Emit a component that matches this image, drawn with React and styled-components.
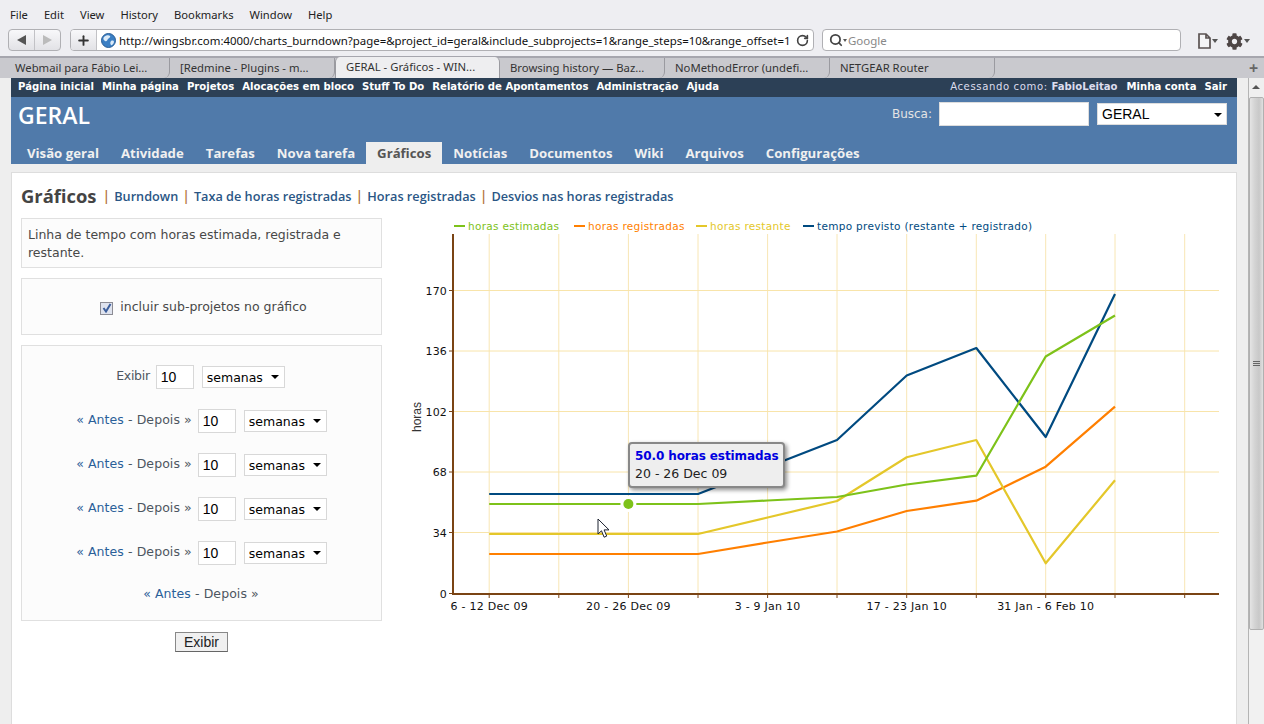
import React from 'react'
import styled, { createGlobalStyle } from 'styled-components'
import { Search, RotateCw, Plus } from 'lucide-react'
import { FaCog } from 'react-icons/fa'

const VERDANA = '"DejaVu Sans", Verdana, sans-serif'
const TREBUCHET = '"Open Sans", "Noto Sans", sans-serif'
const SEGOE = '"Noto Sans", "Open Sans", sans-serif'
const ARIAL = '"Liberation Sans", Arial, sans-serif'

const GlobalStyle = createGlobalStyle`
    html, body {
        margin: 0;
        padding: 0;
        height: 724px;
        overflow: hidden;
        background: #eee;
    }
    * { box-sizing: border-box; }
`

const chromeMenu = ['File', 'Edit', 'View', 'History', 'Bookmarks', 'Window', 'Help']
const browserTabs = ['Webmail para Fábio Lei...', '[Redmine - Plugins - m...', 'GERAL - Gráficos - WIN...', 'Browsing history — Baz...', 'NoMethodError (undefi...', 'NETGEAR Router']
const topLinks = ['Página inicial', 'Minha página', 'Projetos', 'Alocações em bloco', 'Stuff To Do', 'Relatório de Apontamentos', 'Administração', 'Ajuda']
const mainTabs = ['Visão geral', 'Atividade', 'Tarefas', 'Nova tarefa', 'Gráficos', 'Notícias', 'Documentos', 'Wiki', 'Arquivos', 'Configurações']
const chartLinks = ['Burndown', 'Taxa de horas registradas', 'Horas registradas', 'Desvios nas horas registradas']

const gridX = [489.2, 558.8, 628.4, 698, 767.6, 837, 906.7, 976.3, 1045.7, 1115, 1184.7]
const gridY = [[170, 290.5], [136, 351], [102, 411.5], [68, 472], [34, 532.5]]
const xLabels = [[0, '6 - 12 Dec 09'], [2, '20 - 26 Dec 09'], [4, '3 - 9 Jan 10'], [6, '17 - 23 Jan 10'], [8, '31 Jan - 6 Feb 10']]

const series = [
    { color: '#FF7F00', w: 2.2, ys: [554, 554, 554, 554, 542.5, 531.5, 511, 500.7, 466.7, 406.7] },
    { color: '#E4C72A', w: 2.2, ys: [534, 534, 534, 534, 517.5, 501, 457.3, 440, 563.3, 480.3] },
    { color: '#004A80', w: 2.2, ys: [494, 494, 494, 494, 467, 440, 375.5, 348, 437, 294] },
    { color: '#7DC21A', w: 2.2, ys: [504, 504, 504, 504, 500.5, 497, 484.5, 475.7, 356.5, 315.5] },
]

const legend = [
    { color: '#7DC21A', text: 'horas estimadas', x: 454 },
    { color: '#FF7F00', text: 'horas registradas', x: 574 },
    { color: '#E4C72A', text: 'horas restante', x: 696 },
    { color: '#004A80', text: 'tempo previsto (restante + registrado)', x: 803 },
]

function Chart() {
    return (
        <svg width="830" height="410" viewBox="400 218 830 410">
            {gridX.map(x => <line key={x} x1={x} x2={x} y1="234" y2="593" stroke="#F8E6B4" />)}
            {gridY.map(([, y]) => <line key={y} x1="453" x2="1219" y1={y} y2={y} stroke="#F8E4AA" />)}

            <line x1="453" x2="453" y1="234" y2="595" stroke="#7A4414" strokeWidth="2" />
            <line x1="453" x2="1219" y1="594" y2="594" stroke="#7A4414" strokeWidth="2" />
            {gridX.map(x => <line key={x} x1={x} x2={x} y1="594" y2="598" stroke="#7A4414" />)}
            {[...gridY, [0, 593.5]].map(([v, y]) => (
                <g key={v}>
                    <line x1="449" x2="453" y1={y} y2={y} stroke="#7A4414" />
                    <text x="447" y={y + 4} textAnchor="end" fontFamily={VERDANA} fontSize="11" letterSpacing="0.15" fill="#111">{v}</text>
                </g>
            ))}
            {xLabels.map(([i, label]) => (
                <text key={label} x={gridX[i]} y="610" textAnchor="middle" fontFamily={VERDANA} fontSize="11" letterSpacing="0.25" fill="#111">{label}</text>
            ))}
            <text transform="translate(421 417) rotate(-90)" textAnchor="middle" fontFamily={ARIAL} fontSize="12" fill="#333">horas</text>

            {series.map(s => (
                <polyline key={s.color} fill="none" stroke={s.color} strokeWidth={s.w} strokeLinejoin="round"
                    points={s.ys.map((y, i) => `${gridX[i]},${y}`).join(' ')} />
            ))}
            <circle cx="628.4" cy="504" r="8" fill="#fff" />
            <circle cx="628.4" cy="504" r="5" fill="#7DC21A" />

            {legend.map(l => (
                <g key={l.text}>
                    <line x1={l.x} x2={l.x + 11} y1="226" y2="226" stroke={l.color} strokeWidth="2" />
                    <text x={l.x + 14} y="230" fontFamily={VERDANA} fontSize="10.5" letterSpacing="0.3" fill={l.color}>{l.text}</text>
                </g>
            ))}
        </svg>
    )
}

function Globe() {
    return (
        <svg width="15" height="15" viewBox="0 0 15 15">
            <circle cx="7.5" cy="7.5" r="7" fill="#3B7FC4" stroke="#2A5E96" />
            <path d="M3 4c2-2 5-2 6-1s-1 2-2 3-1 3-3 2-2-3-1-4zM10 8c2-1 3 0 3 1s-2 4-3 3-1-3 0-4z" fill="#DCEBF8" />
        </svg>
    )
}

function PageIcon() {
    return (
        <svg width="13" height="16" viewBox="0 0 13 16">
            <path d="M1 1h7l4 4v10H1zM8 1v4h4" fill="#f4f4f6" stroke="#5a5252" strokeWidth="1.7" />
        </svg>
    )
}

function MouseCursor() {
    return (
        <svg width="14" height="21" viewBox="0 0 14 21">
            <path d="M1 1v15l3.5-3.2 2.6 6.4 2.6-1.1-2.6-6.2H12z" fill="#fff" stroke="#1c2230" strokeWidth="1" />
        </svg>
    )
}

function UnitSelect() {
    return (
        <SelectBox>
            <NativeSelect defaultValue="semanas">
                <option>semanas</option>
                <option>meses</option>
            </NativeSelect>
        </SelectBox>
    )
}

function RangeLinks() {
    return <RangeText><RangeLink>« Antes</RangeLink> - Depois »</RangeText>
}

function App() {
    return (
        <Screen>
            <GlobalStyle />
            <BrowserChrome>
                <MenuBar>
                    {chromeMenu.map(m => <MenuItem key={m}>{m}</MenuItem>)}
                </MenuBar>
                <Toolbar>
                    <NavGroup>
                        <NavButton><Arrow $dir="left" /></NavButton>
                        <NavButton $disabled><Arrow $dir="right" $disabled /></NavButton>
                    </NavGroup>
                    <AddressBar>
                        <PlusBox><Plus size={15} strokeWidth={3} color="#333" /></PlusBox>
                        <UrlField>
                            <Globe />
                            <UrlText>http://wingsbr.com:4000/charts_burndown?page=&amp;project_id=geral&amp;include_subprojects=1&amp;range_steps=10&amp;range_offset=1</UrlText>
                            <RotateCw size={13} strokeWidth={3} color="#444" />
                        </UrlField>
                    </AddressBar>
                    <SearchBar>
                        <Search size={14} strokeWidth={3} color="#444" />
                        <SearchCaret />
                        <SearchHint>Google</SearchHint>
                    </SearchBar>
                    <ToolIcons>
                        <ToolIcon><PageIcon /><SmallCaret /></ToolIcon>
                        <ToolIcon><FaCog size={17} color="#4d4545" /><SmallCaret /></ToolIcon>
                    </ToolIcons>
                </Toolbar>
                <TabStrip>
                    {browserTabs.map(t => <BrowserTab key={t} $active={t.startsWith('GERAL')}>{t}</BrowserTab>)}
                    <NewTab>+</NewTab>
                </TabStrip>
            </BrowserChrome>

            <Viewport>
                <Page>
                    <TopMenu>
                        <TopLinks>
                            {topLinks.map(l => <TopLink key={l}>{l}</TopLink>)}
                        </TopLinks>
                        <TopLinks>
                            <LoggedAs>Acessando como: <TopLink>FabioLeitao</TopLink></LoggedAs>
                            <TopLink>Minha conta</TopLink>
                            <TopLink>Sair</TopLink>
                        </TopLinks>
                    </TopMenu>
                    <Header>
                        <HeaderRow>
                            <ProjectName>GERAL</ProjectName>
                            <QuickSearch>
                                <SearchLabel>Busca:</SearchLabel>
                                <SearchInput />
                                <ProjectJump>
                                    <ProjectSelect defaultValue="GERAL"><option>GERAL</option></ProjectSelect>
                                </ProjectJump>
                            </QuickSearch>
                        </HeaderRow>
                        <MainTabs>
                            {mainTabs.map(t => <MainTab key={t} $active={t === 'Gráficos'}>{t}</MainTab>)}
                        </MainTabs>
                    </Header>
                    <Content>
                        <TitleRow>
                            <Title>Gráficos</Title>
                            {chartLinks.map(l => (
                                <React.Fragment key={l}>
                                    <Pipe>|</Pipe>
                                    <ChartLink>{l}</ChartLink>
                                </React.Fragment>
                            ))}
                        </TitleRow>
                        <Columns>
                            <Sidebar>
                                <Panel>
                                    <Intro>Linha de tempo com horas estimada, registrada e restante.</Intro>
                                </Panel>
                                <CheckPanel>
                                    <CheckMark>
                                        <svg width="10" height="10" viewBox="0 0 10 10">
                                            <path d="M1.5 5l2.5 3.5L8.5 1" fill="none" stroke="#3d5f9c" strokeWidth="2" />
                                        </svg>
                                    </CheckMark>
                                    <span>incluir sub-projetos no gráfico</span>
                                </CheckPanel>
                                <RangePanel>
                                    <RangeRow>
                                        <ShowText>Exibir</ShowText>
                                        <NumberInput defaultValue="10" />
                                        <UnitSelect />
                                    </RangeRow>
                                    {[0, 1, 2, 3].map(i => (
                                        <RangeRow key={i}>
                                            <RangeLinks />
                                            <NumberInput defaultValue="10" />
                                            <UnitSelect />
                                        </RangeRow>
                                    ))}
                                    <LastRange><RangeLinks /></LastRange>
                                </RangePanel>
                                <SubmitRow><SubmitButton>Exibir</SubmitButton></SubmitRow>
                            </Sidebar>
                            <ChartArea>
                                <Chart />
                                <Tooltip>
                                    <TooltipTitle>50.0 horas estimadas</TooltipTitle>
                                    <TooltipDate>20 - 26 Dec 09</TooltipDate>
                                </Tooltip>
                                <CursorSpot><MouseCursor /></CursorSpot>
                            </ChartArea>
                        </Columns>
                    </Content>
                </Page>
                <Scrollbar>
                    <ScrollUp />
                    <ScrollThumb><Grip /><Grip /><Grip /></ScrollThumb>
                </Scrollbar>
            </Viewport>
        </Screen>
    )
}

export default App

const Screen = styled.div`
    width: 1264px;
    height: 724px;
    display: flex;
    flex-direction: column;
    overflow: hidden;
`

const BrowserChrome = styled.div`
    height: 78px;
    flex: none;
    background: #eeeef2;
    font-family: ${SEGOE};
    color: #222;
`

const MenuBar = styled.div`
    height: 26px;
    display: flex;
    align-items: center;
    gap: 16px;
    padding: 2px 0 0 10px;
    font-size: 11.2px;
`

const MenuItem = styled.span``

const Toolbar = styled.div`
    height: 30px;
    display: flex;
    align-items: flex-start;
    padding: 3px 0 0 8px;
`

const NavGroup = styled.div`
    width: 53px;
    height: 22px;
    display: flex;
    border: 1px solid #b0b0b4;
    border-radius: 4px;
    background: linear-gradient(#f8f8fa, #e2e2e6);
`

const NavButton = styled.div`
    flex: 1;
    display: flex;
    align-items: center;
    justify-content: center;
    & + & { border-left: 1px solid #c2c2c6; }
`

const Arrow = styled.span`
    width: 0;
    height: 0;
    border-top: 5px solid transparent;
    border-bottom: 5px solid transparent;
    ${p => p.$dir === 'left'
        ? `border-right: 9px solid ${p.$disabled ? '#bbb' : '#555'};`
        : `border-left: 9px solid ${p.$disabled ? '#bbb' : '#555'};`}
`

const AddressBar = styled.div`
    width: 744px;
    height: 22px;
    margin-left: 9px;
    display: flex;
    border: 1px solid #b0b0b4;
    border-radius: 4px;
    overflow: hidden;
    background: #fff;
`

const PlusBox = styled.div`
    width: 26px;
    flex: none;
    display: flex;
    align-items: center;
    justify-content: center;
    background: linear-gradient(#f8f8fa, #e2e2e6);
    border-right: 1px solid #c2c2c6;
`

const UrlField = styled.div`
    flex: 1;
    min-width: 0;
    display: flex;
    align-items: center;
    padding: 0 4px;
    & > svg { flex: none; }
`

const UrlText = styled.span`
    flex: 1;
    margin-left: 3px;
    font-size: 11.43px;
    color: #111;
    white-space: nowrap;
`

const SearchBar = styled.div`
    width: 359px;
    height: 22px;
    margin-left: 8px;
    display: flex;
    align-items: center;
    padding-left: 6px;
    border: 1px solid #b0b0b4;
    border-radius: 4px;
    background: #fff;
`

const SearchHint = styled.span`
    margin-left: 1px;
    font-size: 11.5px;
    color: #888;
`

const SmallCaret = styled.span`
    width: 0;
    height: 0;
    border-left: 3.5px solid transparent;
    border-right: 3.5px solid transparent;
    border-top: 4px solid #555;
`

const SearchCaret = styled(SmallCaret)`
    border-left-width: 2.5px;
    border-right-width: 2.5px;
    border-top-width: 3px;
`

const ToolIcons = styled.div`
    display: flex;
    align-items: center;
    gap: 8px;
    height: 24px;
    margin-left: 17px;
`

const ToolIcon = styled.div`
    display: flex;
    align-items: center;
    gap: 1px;
`

const TabStrip = styled.div`
    height: 22px;
    display: flex;
    padding-left: 5px;
    background: #c9c9ce;
    border-top: 2px solid #a6a6ae;
    font-size: 11.3px;
    color: #333;
`

const BrowserTab = styled.div`
    width: 165px;
    padding: 0 0 2px 10px;
    display: flex;
    align-items: center;
    white-space: nowrap;
    border-right: 1px solid #9a9aa0;
    border-bottom-right-radius: 6px;
    ${p => p.$active && `
        background: #eeeef0;
        margin-top: -1px;
        border-left: 1px solid #9a9aa0;
        border-radius: 5px 5px 0 0;
    `}
`

const NewTab = styled.div`
    margin-left: auto;
    width: 20px;
    padding-left: 5px;
    font-size: 16px;
    font-weight: 700;
    line-height: 20px;
    color: #666;
`

const Viewport = styled.div`
    flex: 1;
    min-height: 0;
    display: flex;
`

const Page = styled.div`
    width: 1248px;
    padding: 0 11px;
    background: #eee;
    display: flex;
    flex-direction: column;
`

const TopMenu = styled.div`
    height: 19px;
    flex: none;
    display: flex;
    align-items: center;
    justify-content: space-between;
    padding: 0 10px 2px 7px;
    background: #2c4056;
    color: #fff;
    font-family: ${VERDANA};
    font-size: 10.1px;
`

const TopLinks = styled.div`
    display: flex;
    gap: 8px;
`

const TopLink = styled.span`
    font-weight: 700;
    letter-spacing: 0;
`

const LoggedAs = styled.span`
    color: #dde;
    margin-right: 1px;
    letter-spacing: 0.6px;
`

const Header = styled.div`
    height: 67px;
    flex: none;
    background: #507aaa;
    display: flex;
    flex-direction: column;
    justify-content: space-between;
    color: #fff;
`

const HeaderRow = styled.div`
    display: flex;
    justify-content: space-between;
    padding: 5px 10px 0 7px;
`

const ProjectName = styled.div`
    font-family: ${TREBUCHET};
    font-size: 23px;
    font-weight: 600;
    line-height: 26px;
`

const QuickSearch = styled.div`
    display: flex;
    align-items: center;
    height: 24px;
`

const SearchLabel = styled.span`
    font-family: ${VERDANA};
    font-size: 12px;
    color: #e4e4e4;
    margin: 0 7px 0 0;
`

const SearchInput = styled.input`
    width: 150px;
    height: 24px;
    border: 1px solid #ddd;
    background: #fff;
`

const ProjectJump = styled.div`
    position: relative;
    margin-left: 8px;
    &::after {
        content: "";
        position: absolute;
        right: 5px;
        top: 10px;
        border-left: 4px solid transparent;
        border-right: 4px solid transparent;
        border-top: 4px solid #000;
        pointer-events: none;
    }
`

const ProjectSelect = styled.select`
    appearance: none;
    display: block;
    width: 130px;
    height: 22px;
    padding: 0 0 0 4px;
    border: 1px solid #ddd;
    border-radius: 0;
    background: #fff;
    font-family: ${ARIAL};
    font-size: 14px;
    color: #000;
`

const MainTabs = styled.div`
    display: flex;
    padding-left: 5px;
`

const MainTab = styled.div`
    height: 22px;
    padding: 0 11px;
    font-family: ${TREBUCHET};
    font-size: 13.2px;
    font-weight: 700;
    line-height: 23px;
    white-space: nowrap;
    color: ${p => (p.$active ? '#555' : '#f0f0f0')};
    background: ${p => (p.$active ? '#eee' : 'transparent')};
`

const Content = styled.div`
    flex: 1;
    min-height: 0;
    margin: 8px 0 0 0;
    padding: 10px 9px;
    background: #fff;
    border: 1px solid #ddd;
    border-bottom: none;
`

const TitleRow = styled.div`
    height: 24px;
    margin-bottom: 11px;
    display: flex;
    align-items: center;
    font-family: ${TREBUCHET};
    white-space: nowrap;
`

const Title = styled.div`
    font-size: 18.4px;
    font-weight: 700;
    color: #444;
    margin-right: 2px;
`

const Pipe = styled.span`
    font-size: 14px;
    font-weight: 600;
    color: #b5753f;
    margin: 0 4px;
`

const ChartLink = styled.span`
    font-size: 12.7px;
    font-weight: 600;
    color: #2a5685;
    padding-top: 2px;
`

const Columns = styled.div`
    display: flex;
    gap: 18px;
    align-items: flex-start;
`

const Sidebar = styled.div`
    width: 361px;
    flex: none;
    display: flex;
    flex-direction: column;
    gap: 10px;
    font-family: ${VERDANA};
    font-size: 12.5px;
    color: #484848;
`

const Panel = styled.div`
    background: #fcfcfc;
    border: 1px solid #e0e0e0;
`

const Intro = styled.div`
    height: 48px;
    padding: 7px 6px 0;
    line-height: 18px;
`

const CheckPanel = styled(Panel)`
    height: 57px;
    display: flex;
    align-items: center;
    justify-content: center;
    gap: 7px;
    padding-left: 4px;
`

const CheckMark = styled.div`
    width: 13px;
    height: 13px;
    margin-top: 3px;
    display: flex;
    align-items: center;
    justify-content: center;
    border: 1px solid #8c8c94;
    background: #dfe3ee;
`

const RangePanel = styled(Panel)`
    height: 276px;
    padding-top: 19px;
    display: flex;
    flex-direction: column;
    align-items: center;
    gap: 20px;
`

const RangeRow = styled.div`
    height: 24px;
    display: flex;
    align-items: center;
`

const RangeText = styled.span`
    color: #4c5660;
    margin: -4px 6px 0 0;
    letter-spacing: 0.08px;
`

const ShowText = styled(RangeText)`
    letter-spacing: -0.3px;
    margin-left: -2px;
`

const RangeLink = styled.span`
    color: #2a6099;
`

const NumberInput = styled.input`
    width: 38px;
    height: 24px;
    padding: 0 4px;
    border: 1px solid #d8d8d8;
    background: #fff;
    font-family: ${ARIAL};
    font-size: 14px;
    color: #000;
`

const SelectBox = styled.div`
    position: relative;
    margin-left: 8px;
    &::after {
        content: "";
        position: absolute;
        right: 6px;
        top: 9px;
        border-left: 4px solid transparent;
        border-right: 4px solid transparent;
        border-top: 4px solid #000;
        pointer-events: none;
    }
`

const NativeSelect = styled.select`
    appearance: none;
    display: block;
    width: 83px;
    height: 22px;
    padding: 0 0 0 4px;
    border: 1px solid #d8d8d8;
    border-radius: 0;
    background: #fff;
    font-family: ${VERDANA};
    font-size: 12.5px;
    color: #000;
`

const LastRange = styled.div`
    display: flex;
    margin-top: 5px;
    padding-left: 5px;
`

const SubmitRow = styled.div`
    display: flex;
    justify-content: center;
    margin-top: 1px;
`

const SubmitButton = styled.button`
    width: 53px;
    height: 20px;
    padding: 0;
    background: #f0f0f0;
    border: 1px solid #888;
    border-bottom-color: #666;
    font-family: ${ARIAL};
    font-size: 14px;
    color: #222;
`

const ChartArea = styled.div`
    position: relative;
    width: 830px;
    height: 410px;
    flex: none;
`

const Tooltip = styled.div`
    position: absolute;
    left: 228px;
    top: 224px;
    width: 157px;
    height: 46px;
    padding: 3px 0 0 5px;
    background: #eee;
    border: 2px solid #888;
    border-radius: 4px;
    box-shadow: 2px 2px 4px rgba(0, 0, 0, 0.45);
    font-family: ${VERDANA};
    font-size: 12.5px;
    line-height: 18px;
    white-space: nowrap;
`

const TooltipTitle = styled.div`
    font-size: 12px;
    letter-spacing: -0.1px;
    font-weight: 700;
    color: #0000e0;
`

const TooltipDate = styled.div`
    color: #222;
`

const CursorSpot = styled.div`
    position: absolute;
    left: 197px;
    top: 300px;
    line-height: 0;
`

const Scrollbar = styled.div`
    width: 16px;
    flex: none;
    display: flex;
    flex-direction: column;
    background: #f1f1f1;
    border-left: 1px solid #b4b4b4;
`

const ScrollUp = styled.div`
    height: 19px;
    flex: none;
    position: relative;
    background: #efefef;
    &::after {
        content: "";
        position: absolute;
        left: 3px;
        top: 7px;
        border-left: 4.5px solid transparent;
        border-right: 4.5px solid transparent;
        border-bottom: 4px solid #555;
    }
`

const ScrollThumb = styled.div`
    height: 533px;
    display: flex;
    flex-direction: column;
    align-items: center;
    justify-content: center;
    gap: 1px;
    background: linear-gradient(90deg, #e4e4e4, #d4d4d4 35%, #c8c8c8 70%, #e0e0e0);
    border: 1px solid #b0b0b0;
    border-radius: 2px;
`

const Grip = styled.span`
    width: 7px;
    height: 1px;
    background: #666;
`
